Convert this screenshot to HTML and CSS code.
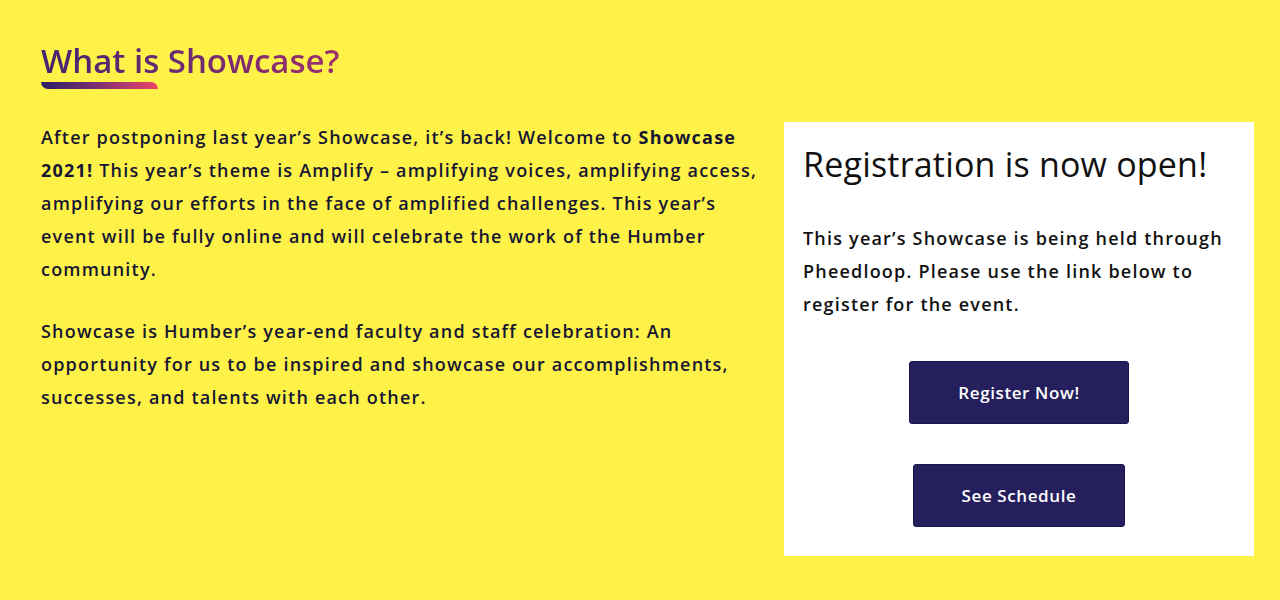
FILE: index.html
```html
<!DOCTYPE html>
<html lang="en">
<head>
<meta charset="utf-8">
<title>What is Showcase?</title>
<link rel="stylesheet" href="styles.css">
</head>
<body>
<main class="section">
  <h2 class="section-title"><span class="title-text">What is Showcase?</span></h2>
  <div class="content">
    <div class="intro">
      <p>After postponing last year’s Showcase, it’s back! Welcome to <strong>Showcase 2021!</strong> This year’s theme is Amplify – amplifying voices, amplifying access, amplifying our efforts in the face of amplified challenges. This year’s event will be fully online and will celebrate the work of the Humber community.</p>
      <p>Showcase is Humber’s year-end faculty and staff celebration: An opportunity for us to be inspired and showcase our accomplishments, successes, and talents with each other.</p>
    </div>
    <aside class="card">
      <h3 class="card-title">Registration is now open!</h3>
      <p class="card-text">This year’s Showcase is being held through Pheedloop. Please use the link below to register for the event.</p>
      <div class="actions">
        <a class="btn" href="#">Register Now!</a>
        <a class="btn" href="#">See Schedule</a>
      </div>
    </aside>
  </div>
</main>
</body>
</html>
```

FILE: styles.css
```css
html, body {
  margin: 0;
  padding: 0;
}
body {
  background: #fef249;
  font-family: "Open Sans", "Liberation Sans", sans-serif;
  color: #161633;
  width: 1280px;
  height: 600px;
  overflow: hidden;
}
.section {
  padding: 40px 26px 0 41px;
}
.section-title {
  margin: 0;
  font-size: 33px;
  font-weight: 600;
  line-height: 42px;
}
.title-text {
  background: linear-gradient(90deg, #45266f 0%, #6a2a72 45%, #9c306c 100%);
  -webkit-background-clip: text;
  background-clip: text;
  color: transparent;
}
.section-title::after {
  content: "";
  display: block;
  width: 117px;
  height: 7px;
  background: linear-gradient(90deg, #2a2068 0%, #8a3272 55%, #ef4569 100%);
  border-radius: 0 7px 0 7px;
}
.content {
  display: grid;
  grid-template-columns: 720px 470px;
  column-gap: 23px;
  margin-top: 32px;
  align-items: start;
}
.intro p {
  margin: 0 0 29px;
  font-size: 18px;
  font-weight: 600;
  line-height: 33px;
  letter-spacing: 1.2px;
}
.intro strong {
  font-weight: 700;
}
.card {
  background: #ffffff;
  margin-top: 1px;
  padding: 20px 19px 29px 19px;
  color: #111111;
}
.card-title {
  margin: 0;
  font-size: 34px;
  font-weight: 500;
  line-height: 44px;
  letter-spacing: 0.2px;
}
.card-text {
  margin: 36px 0 0;
  font-size: 18px;
  font-weight: 600;
  line-height: 33px;
  letter-spacing: 1.2px;
}
.actions {
  display: flex;
  flex-direction: column;
  align-items: center;
  gap: 40px;
  margin-top: 40px;
}
.btn {
  box-sizing: border-box;
  display: flex;
  align-items: center;
  justify-content: center;
  height: 63px;
  padding: 0 48px;
  background: #251f5e;
  border: 1px solid #1b1650;
  border-radius: 3px;
  color: #ffffff;
  font-size: 17px;
  font-weight: 600;
  letter-spacing: 0.6px;
  text-decoration: none;
}
```
